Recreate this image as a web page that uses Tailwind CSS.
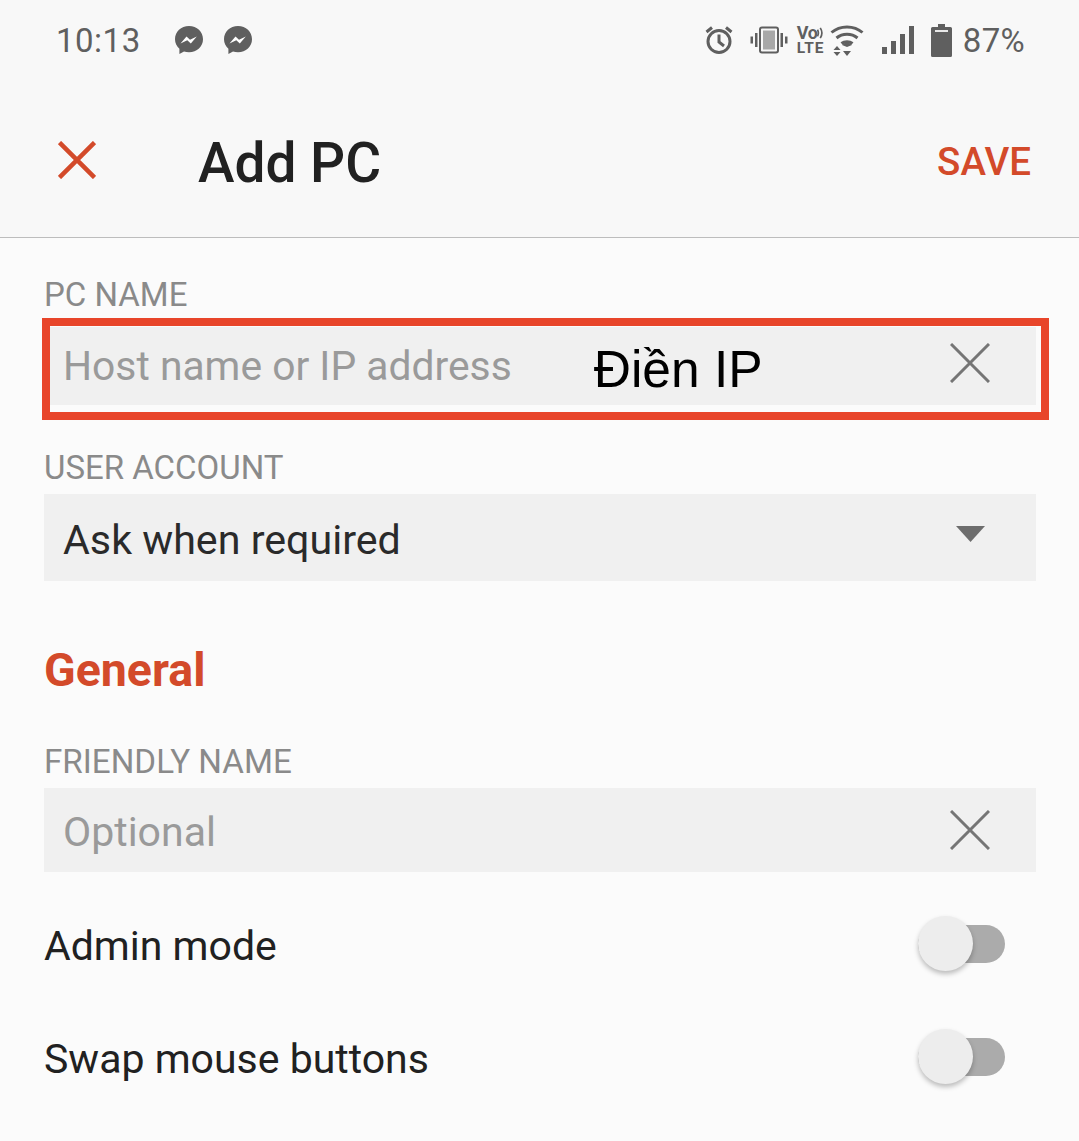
<!DOCTYPE html>
<html><head><meta charset="utf-8"><script src="https://cdn.jsdelivr.net/npm/@tailwindcss/browser@4"></script></head>
<body class="m-0">
<div class="w-[1079px] h-[1141px] overflow-hidden bg-[#fbfbfb] font-['Roboto',sans-serif] relative">
  <div class="h-[238px] bg-[#f8f8f8] border-b border-[#bdbdbd]">
    <div class="h-[80px] flex items-center pl-[56px] pr-[54px] text-[#5f5f5f]">
      <span class="text-[33px] leading-none tracking-[0.5px]">10:13</span>
      <svg class="ml-[33px]" width="30" height="30" viewBox="0 0 30 30"><path d="M15 1C7 1 1 6.800 1 14.200c0 3.900 1.700 7.200 4.400 9.500V29l4.600-2.600c1.600.5 3.200.8 5 .8 8 0 14-5.700 14-13S23 1 15 1z" fill="#5f5f5f"/><path d="M6.500 18.500l6-7 3.500 3.300 6.800-3.300-6 7-3.500-3.300z" fill="#fff"/></svg>
      <svg class="ml-[19px]" width="30" height="30" viewBox="0 0 30 30"><path d="M15 1C7 1 1 6.800 1 14.200c0 3.900 1.700 7.200 4.400 9.500V29l4.600-2.600c1.600.5 3.200.8 5 .8 8 0 14-5.700 14-13S23 1 15 1z" fill="#5f5f5f"/><path d="M6.500 18.500l6-7 3.500 3.300 6.800-3.300-6 7-3.500-3.300z" fill="#fff"/></svg>
      <svg class="ml-auto" width="30" height="30" viewBox="0 0 30 30" fill="none" stroke="#5f5f5f" stroke-width="3"><circle cx="15" cy="16.500" r="11"/><path d="M15 9.500v7.500l5 4M2.500 7L8 2.500M27.500 7L22 2.500"/></svg>
      <svg class="ml-[16px]" width="38" height="28" viewBox="0 0 38 28" fill="#5f5f5f"><rect x="10" y="1.500" width="18" height="25" rx="2" fill="none" stroke="#5f5f5f" stroke-width="2"/><rect x="13" y="4.500" width="12" height="19" fill="#a8a8a8"/><rect x="5" y="7" width="2.500" height="14"/><rect x="30.500" y="7" width="2.500" height="14"/><rect x="0.500" y="10.500" width="2.500" height="7"/><rect x="35" y="10.500" width="2.500" height="7"/></svg>
      <div class="ml-[9px] w-[28px] h-[32px] flex flex-col justify-center text-[#5f5f5f] font-bold leading-none">
        <div class="flex items-center h-[16px]"><span class="text-[18px] leading-[14px] tracking-[-0.5px]">Vo</span><svg width="8" height="16" viewBox="0 0 8 16" fill="none" stroke="#5f5f5f" stroke-width="1.800"><path d="M0.500 4.500q2 3.500 0 7M3.500 2.500q3.500 5.500 0 11"/></svg></div>
        <span class="text-[15.500px] leading-[14px] tracking-[0.8px]">LTE</span>
      </div>
      <svg class="ml-[5px]" width="34" height="32" viewBox="0 0 34 32" fill="none" stroke="#5f5f5f" stroke-width="3"><path d="M1.500 8.500C10 1 24 1 32.500 8.500M6.500 14C12.500 9 21.500 9 27.500 14M11.500 19.500C14.500 17 19.500 17 22.500 19.500"/><path d="M17 17.500l5 3.500-5 2-5-2z M7 22l3.500 4h-7z M7 32l3.500-4h-7z M17 32l-4-5h8z" fill="#5f5f5f" stroke="none"/></svg>
      <svg class="ml-[18px]" width="32" height="29" viewBox="0 0 32 29" fill="#5f5f5f"><rect x="0" y="21" width="5" height="7"/><rect x="9" y="15" width="5" height="13"/><rect x="18" y="8" width="5" height="20"/><rect x="27" y="0" width="5" height="28"/></svg>
      <svg class="ml-[17px]" width="21" height="33" viewBox="0 0 21 33" fill="#5f5f5f"><path d="M7 0h7v3h5.500a1.500 1.500 0 0 1 1.500 1.500V31.500a1.500 1.500 0 0 1-1.500 1.500H1.500A1.500 1.500 0 0 1 0 31.500V4.500A1.500 1.500 0 0 1 1.500 3H7z"/><rect x="4" y="6" width="13" height="2" fill="#e8e8e8"/></svg>
      <span class="ml-[11px] text-[33px] leading-none tracking-[0.3px]">87%</span>
    </div>
    <div class="flex items-center h-[157px] pl-[58px] pr-[48px] pt-[2px]">
      <svg width="38" height="38" viewBox="0 0 38 38" fill="none" stroke="#d34a2a" stroke-width="4.500"><path d="M1.500 1.500l35 35M36.500 1.500l-35 35"/></svg>
      <span class="ml-[102px] mt-[7px] text-[55px] leading-none font-medium text-[#212121]">Add PC</span>
      <span class="ml-auto mt-[6px] text-[38.500px] leading-none font-medium text-[#d34a2a]">SAVE</span>
    </div>
  </div>
  <div class="pl-[44px] pr-[43px] flex flex-col">
    <div class="mt-[39px] h-[36px] text-[33px] leading-[36px] text-[#8a8a8a]">PC NAME</div>
    <div class="relative mt-[14px] h-[78px] bg-[#f0f0f0] flex items-center pl-[19px] pr-[46px]">
      <span class="text-[40.800px] leading-none text-[#9a9a9a]">Host name or IP address</span>
      <span class="ml-[82px] mt-[8px] text-[51.500px] leading-none text-black font-['Liberation_Sans',sans-serif]">Điền IP</span>
      <svg class="ml-auto mb-[6px]" width="40" height="40" viewBox="0 0 40 40" fill="none" stroke="#757575" stroke-width="3"><path d="M1 1l38 38M39 1L1 39"/></svg>
      <div class="absolute left-[-2px] top-[-9px] w-[1007px] h-[102px] border-[8px] border-[#e8452a]"></div>
    </div>
    <div class="mt-[45px] h-[36px] text-[33px] leading-[36px] text-[#8a8a8a]">USER ACCOUNT</div>
    <div class="mt-[8px] h-[87px] bg-[#f0f0f0] flex items-center pl-[19px] pr-[51px]">
      <span class="mt-[7px] text-[41.200px] leading-none text-[#2a2a2a]">Ask when required</span>
      <svg class="ml-auto mb-[8px]" width="29" height="16" viewBox="0 0 29 16" fill="#6d6d6d"><path d="M0 0h29L14.500 16z"/></svg>
    </div>
    <div class="mt-[64px] h-[50px] text-[46.500px] leading-[50px] font-bold text-[#d34a2a]">General</div>
    <div class="mt-[49px] h-[36px] text-[33.200px] leading-[36px] text-[#8a8a8a]">FRIENDLY NAME</div>
    <div class="mt-[8px] h-[84px] bg-[#f0f0f0] flex items-center pl-[19px] pr-[46px]">
      <span class="mt-[4px] text-[41px] leading-none text-[#9a9a9a]">Optional</span>
      <svg class="ml-auto" width="40" height="40" viewBox="0 0 40 40" fill="none" stroke="#757575" stroke-width="3"><path d="M1 1l38 38M39 1L1 39"/></svg>
    </div>
    <div class="mt-[29px] h-[86px] flex items-center justify-between pr-[31px]">
      <span class="mt-[4px] text-[41px] leading-none text-[#212121]">Admin mode</span>
      <div class="relative w-[87px] h-[38px] rounded-full bg-[#ababab] ml-auto"><div class="absolute left-[0px] top-[-9px] size-[55px] rounded-full bg-[#ededed] shadow-[0_3px_5px_rgba(0,0,0,0.25)]"></div></div>
    </div>
    <div class="mt-[27px] h-[86px] flex items-center justify-between pr-[31px]">
      <span class="mt-[4px] text-[41px] leading-none text-[#212121]">Swap mouse buttons</span>
      <div class="relative w-[87px] h-[38px] rounded-full bg-[#ababab] ml-auto"><div class="absolute left-[0px] top-[-9px] size-[55px] rounded-full bg-[#ededed] shadow-[0_3px_5px_rgba(0,0,0,0.25)]"></div></div>
    </div>
  </div>
</div>
</body></html>
